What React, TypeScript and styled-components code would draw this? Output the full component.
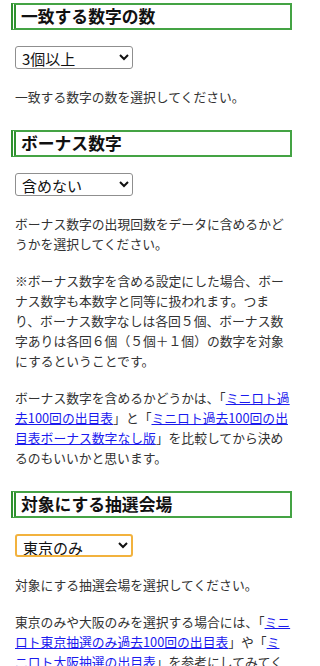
import React from "react";
import styled, { createGlobalStyle } from "styled-components";

const GlobalStyle = createGlobalStyle`
  html, body {
    margin: 0;
    padding: 0;
    background: #ffffff;
  }
  body {
    font-family: "Noto Sans CJK JP", "Noto Sans", sans-serif;
    color: #333333;
  }
`;

const Page = styled.main`
  box-sizing: border-box;
  width: 300px;
  padding: 3px 8px 0 11px;
`;

const Section = styled.section`
  & + & {
    margin-top: 23px;
  }
`;

const Heading = styled.h2`
  margin: 0;
  padding: 0 0 0 5px;
  font-size: 16.8px;
  line-height: 23px;
  font-weight: 700;
  color: #111111;
  border: 2px solid #44a344;
  border-left: 5px double #2f912f;
`;

const Body = styled.div`
  padding-left: 4px;
`;

const Select = styled.select<{ $focused?: boolean }>`
  display: block;
  box-sizing: border-box;
  margin: 16px 0 18px;
  width: 118px;
  height: 23px;
  padding: 0 2px;
  font-family: "Noto Sans CJK JP", "Noto Sans", sans-serif;
  font-size: 15px;
  color: #111111;
  background: #ffffff;
  border: ${(p) => (p.$focused ? "2px solid #f2b23e" : "1px solid #8f8f8f")};
  border-radius: 3px;
`;

const Text = styled.p`
  margin: 0;
  font-size: 12.8px;
  line-height: 20px;

  & + & {
    margin-top: 17px;
  }
`;

const Link = styled.a`
  color: #1a1aee;
  text-decoration: underline;
`;

const App = () => {
  return (
    <>
      <GlobalStyle />
      <Page>
        <Section>
          <Heading>一致する数字の数</Heading>
          <Body>
            <Select defaultValue="3">
              <option value="3">3個以上</option>
              <option value="4">4個以上</option>
              <option value="5">5個</option>
            </Select>
            <Text>一致する数字の数を選択してください。</Text>
          </Body>
        </Section>

        <Section>
          <Heading>ボーナス数字</Heading>
          <Body>
            <Select defaultValue="no">
              <option value="no">含めない</option>
              <option value="yes">含める</option>
            </Select>
            <Text>ボーナス数字の出現回数をデータに含めるかどうかを選択してください。</Text>
            <Text>
              ※ボーナス数字を含める設定にした場合、ボーナス数字も本数字と同等に扱われます。つまり、ボーナス数字なしは各回５個、ボーナス数字ありは各回６個（５個＋１個）の数字を対象にするということです。
            </Text>
            <Text>
              ボーナス数字を含めるかどうかは、「
              <Link href="#">ミニロト過去100回の出目表</Link>」と「
              <Link href="#">ミニロト過去100回の出目表ボーナス数字なし版</Link>
              」を比較してから決めるのもいいかと思います。
            </Text>
          </Body>
        </Section>

        <Section>
          <Heading>対象にする抽選会場</Heading>
          <Body>
            <Select defaultValue="tokyo" $focused>
              <option value="all">すべて</option>
              <option value="tokyo">東京のみ</option>
              <option value="osaka">大阪のみ</option>
            </Select>
            <Text>対象にする抽選会場を選択してください。</Text>
            <Text>
              東京のみや大阪のみを選択する場合には、「
              <Link href="#">ミニロト東京抽選のみ過去100回の出目表</Link>」や「
              <Link href="#">ミニロト大阪抽選の出目表</Link>
              」を参考にしてみてください。
            </Text>
          </Body>
        </Section>
      </Page>
    </>
  );
};

export default App;
